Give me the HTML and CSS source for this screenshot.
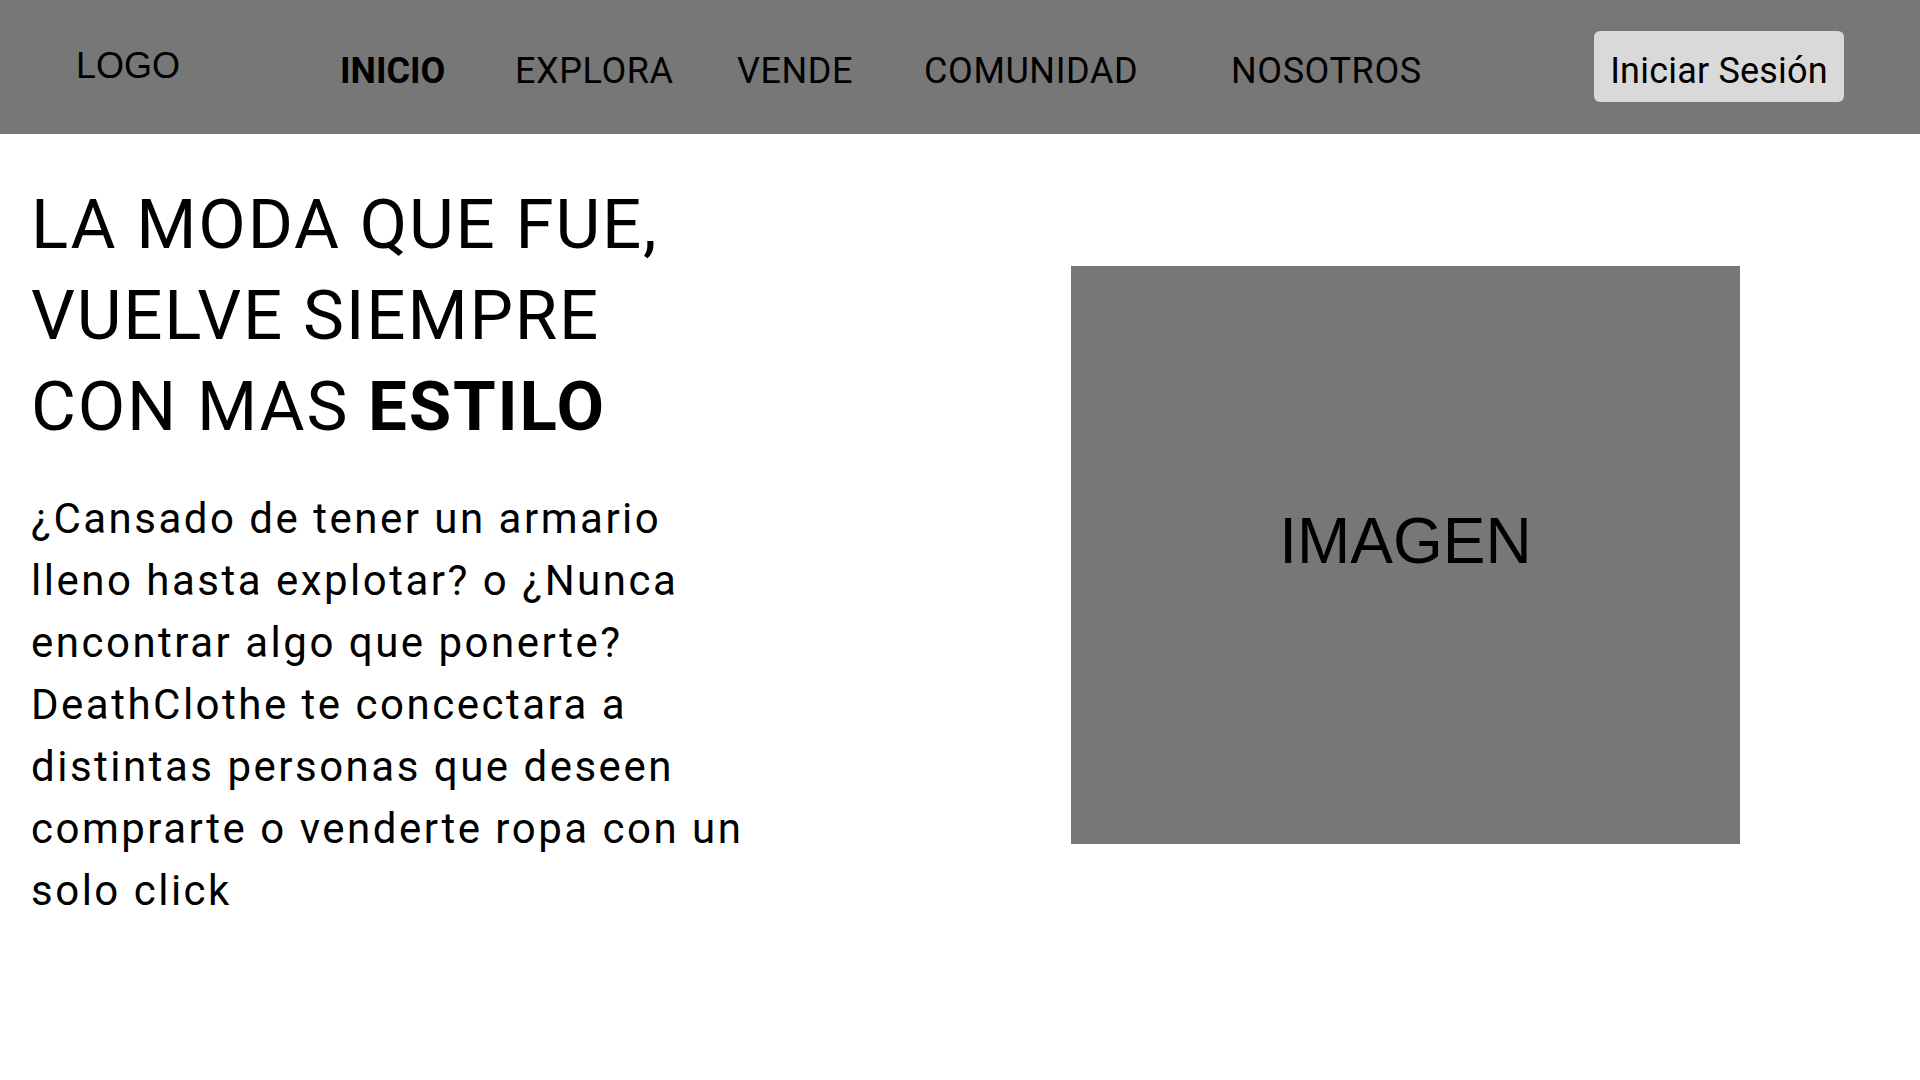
FILE: index.html
```html
<!DOCTYPE html>
<html lang="es">
<head>
<meta charset="utf-8">
<title>DeathClothe</title>
<link rel="stylesheet" href="styles.css">
</head>
<body>
<header class="topbar">
  <div class="logo">LOGO</div>
  <nav class="nav">
    <a class="nav-link active" href="#">INICIO</a>
    <a class="nav-link" href="#">EXPLORA</a>
    <a class="nav-link" href="#">VENDE</a>
    <a class="nav-link" href="#">COMUNIDAD</a>
    <a class="nav-link" href="#">NOSOTROS</a>
  </nav>
  <button class="login">Iniciar Sesión</button>
</header>
<main class="hero">
  <section class="hero-text">
    <h1 class="headline">LA MODA QUE FUE,<br>VUELVE SIEMPRE<br>CON MAS <strong>ESTILO</strong></h1>
    <p class="lead">¿Cansado de tener un armario<br>lleno hasta explotar? o ¿Nunca<br>encontrar algo que ponerte?<br>DeathClothe te concectara a<br>distintas personas que deseen<br>comprarte o venderte ropa con un<br>solo click</p>
  </section>
  <div class="hero-image">IMAGEN</div>
</main>
</body>
</html>
```
FILE: styles.css
```css
* { box-sizing: border-box; }
html, body { margin: 0; padding: 0; background: #ffffff; }
body { font-family: Roboto, "Noto Sans", sans-serif; color: #000; }

.topbar {
  height: 134px;
  background: #777777;
  display: flex;
  align-items: center;
  padding: 0 76px 0 76px;
}
.logo {
  font-family: "Liberation Sans", Arial, sans-serif;
  font-size: 36px;
  width: 264px;
  margin-top: -2px;
}
.nav {
  flex: 1;
  display: grid;
  grid-template-columns: 175px 222px 187px 307px auto;
  align-items: center;
  margin-top: 8px;
}
.nav-link {
  color: #000;
  text-decoration: none;
  font-size: 36px;
  font-weight: 400;
  letter-spacing: 0.6px;
}
.nav-link.active { font-weight: 700; letter-spacing: 0; }
.login {
  font-family: Roboto, sans-serif;
  font-size: 36px;
  letter-spacing: 0.2px;
  background: #d9d9d9;
  color: #000;
  border: none;
  border-radius: 6px;
  width: 250px;
  height: 71px;
  padding: 8px 0 0 0;
  margin-top: -1px;
}

.hero { display: flex; align-items: flex-start; padding-left: 31px; }
.hero-text { width: 760px; }
.headline {
  margin: 45px 0 0 0;
  font-size: 69px;
  font-weight: 400;
  line-height: 91px;
  letter-spacing: 1.8px;
}
.headline strong { font-weight: 700; }
.lead {
  margin: 36px 0 0 0;
  font-size: 42px;
  line-height: 62px;
  letter-spacing: 2.5px;
}
.hero-image {
  margin: 132px 0 0 280px;
  width: 669px;
  height: 578px;
  background: #777777;
  display: flex;
  align-items: center;
  justify-content: center;
  font-family: "Liberation Sans", Arial, sans-serif;
  font-size: 64px;
  padding-bottom: 28px;
}
```
